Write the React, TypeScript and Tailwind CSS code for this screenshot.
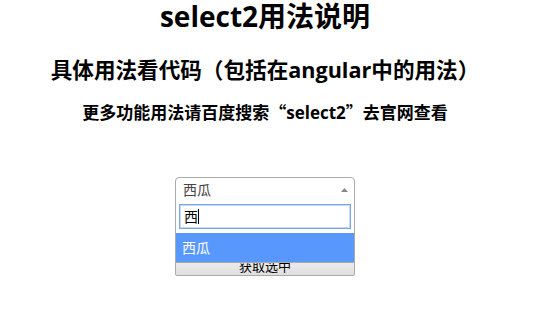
import React from "react";

const cjk = { fontFamily: '"Noto Sans CJK SC", sans-serif' };

export default function App() {
  return (
    <div
      className="w-[551px] h-[322px] bg-white text-black overflow-hidden"
      style={{ fontFamily: '"Open Sans", "Noto Sans CJK SC", sans-serif' }}
    >
      <div className="w-[530px] text-center">
        <h1 className="text-[28px] leading-[32px] font-bold">select2用法说明</h1>
        <h2 className="text-[21.6px] leading-[28px] font-bold mt-[24px]">具体用法看代码（包括在angular中的用法）</h2>
        <h3 className="text-[17px] leading-[22px] font-bold mt-[17px]">
          更多功能用法请百度搜索<span style={cjk}>“</span>select2<span style={cjk}>”</span>去官网查看
        </h3>
        <div className="relative w-[180px] mx-auto mt-[53px] text-left">
          <div className="h-[25px] border border-[#aaa] rounded-t-[4px] bg-white flex items-center justify-between pl-[7px] pr-[6px]">
            <span className="text-[14px] leading-[20px] text-[#444] font-normal">西瓜</span>
            <svg width="7" height="4" viewBox="0 0 7 4">
              <path d="M0 4 L3.5 0 L7 4 Z" fill="#888" />
            </svg>
          </div>
          <div className="absolute left-0 right-0 top-[24px] border border-t-0 border-[#aaa] bg-white z-10">
            <div className="px-[3px] pt-[3px] pb-[4px]">
              <div className="h-[25px] border border-[#7aa7e0] shadow-[inset_0_0_0_1px_#c5daf5] flex items-center px-[4px]">
                <span className="text-[14px] leading-[18px] font-normal text-black">西</span>
                <span className="w-[1px] h-[15px] bg-black"></span>
              </div>
            </div>
            <div className="h-[29px] bg-[#5897fb] text-white text-[14px] leading-[29px] font-normal px-[6px]">西瓜</div>
          </div>
          <button className="mt-[53px] w-[180px] h-[21px] border border-[#a9a9a9] rounded-[2px] bg-gradient-to-b from-[#f3f3f3] to-[#dfdfdf] text-[13px] leading-[16px] font-normal text-black text-center">
            获取选中
          </button>
        </div>
      </div>
    </div>
  );
}
